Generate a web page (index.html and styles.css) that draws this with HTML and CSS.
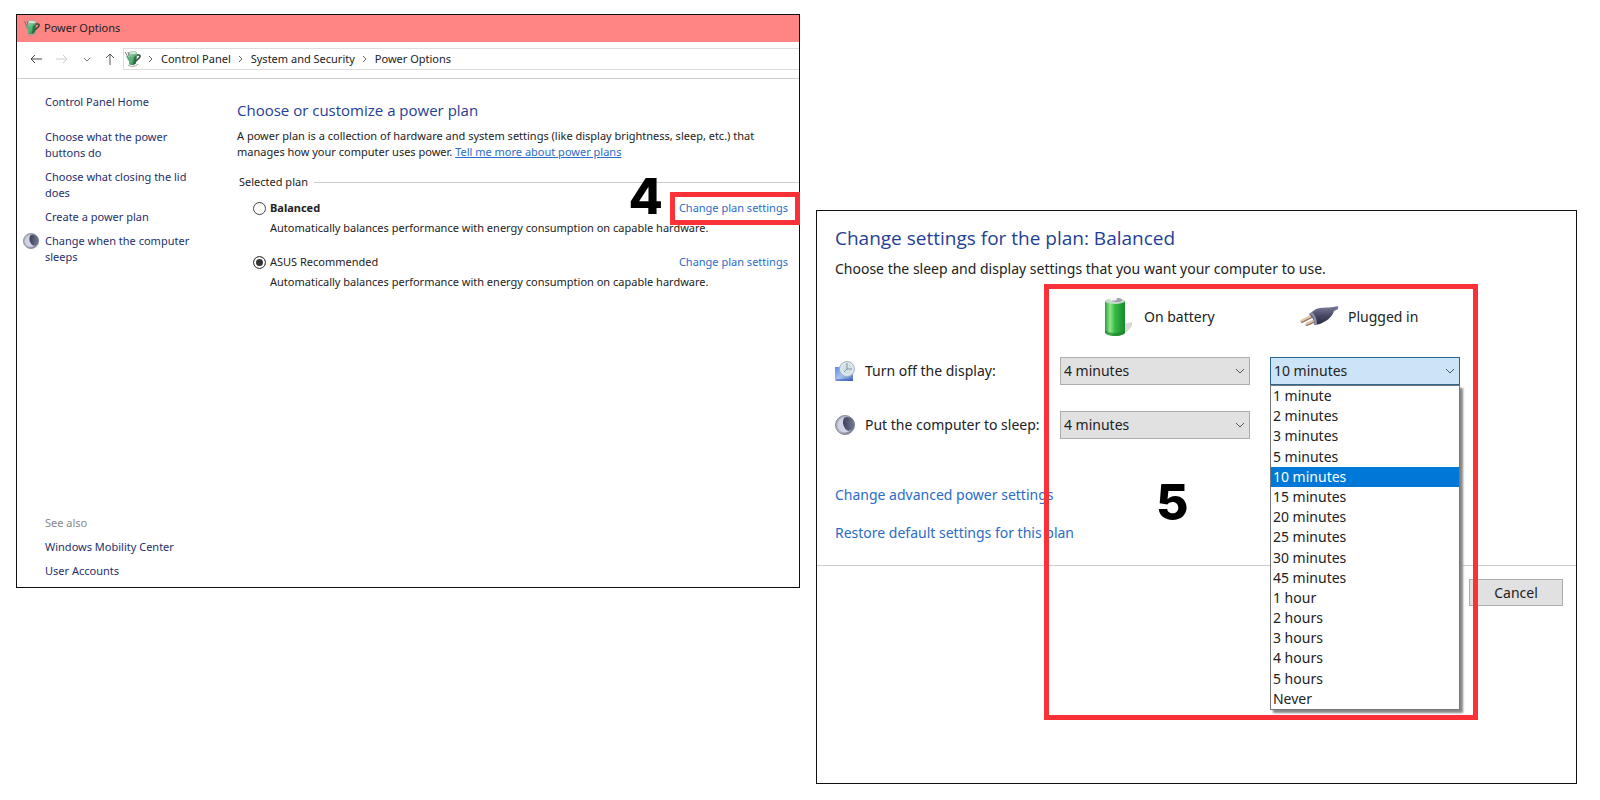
FILE: index.html
```
<!DOCTYPE html>
<html lang="en">
<head>
    <meta charset="UTF-8">
    <title>Power Options</title>
    <link rel="stylesheet" href="styles.css">
</head>
<body>

    <!-- shared icons -->
    <svg class="defs" aria-hidden="true">
        <defs>
            <linearGradient id="green" x1="0" x2="1" y1="0" y2="0">
                <stop offset="0" stop-color="#2f9a3d"/>
                <stop offset="0.25" stop-color="#8fe88a"/>
                <stop offset="0.5" stop-color="#35b843"/>
                <stop offset="1" stop-color="#178a2a"/>
            </linearGradient>
            <linearGradient id="mug" x1="0" x2="1" y1="0" y2="1">
                <stop offset="0" stop-color="#a5dcb4"/>
                <stop offset="0.5" stop-color="#4fae6c"/>
                <stop offset="1" stop-color="#1f6a3c"/>
            </linearGradient>
            <linearGradient id="moon-bg" x1="0" x2="1" y1="0" y2="1">
                <stop offset="0" stop-color="#a9acba"/>
                <stop offset="0.5" stop-color="#b4b7c8"/>
                <stop offset="1" stop-color="#6b6d7c"/>
            </linearGradient>
            <linearGradient id="moon-dark" x1="0" x2="1" y1="0" y2="0">
                <stop offset="0" stop-color="#3b415c"/>
                <stop offset="1" stop-color="#777c94"/>
            </linearGradient>
            <linearGradient id="screen" x1="0" x2="1" y1="0" y2="1">
                <stop offset="0" stop-color="#5f8be0"/>
                <stop offset="0.5" stop-color="#a9c2f0"/>
                <stop offset="1" stop-color="#3c62bd"/>
            </linearGradient>
            <linearGradient id="plug-body" x1="0" x2="0" y1="0" y2="1">
                <stop offset="0" stop-color="#7d7f9e"/>
                <stop offset="0.5" stop-color="#474865"/>
                <stop offset="1" stop-color="#2a293d"/>
            </linearGradient>
        </defs>
        <symbol id="power" viewBox="0 0 16 16">
            <path d="M3 14c2 2 8 2 10-1" fill="none" stroke="#9aa09c"/>
            <path d="M4 3l8-1-1 10c0 2-6 3-7 1z" fill="url(#mug)"/>
            <path d="M1 5l4 1 3 3-2 3-3-3z" fill="#5fae78"/>
            <path d="M0 1l3 5M3 1l1 4" stroke="#6f7571" fill="none"/>
            <ellipse cx="8" cy="2" rx="4" ry="1.500" fill="#d3ecd8" stroke="#7c9a84" stroke-width=".5"/>
            <path d="M9 6l3-2-1 8-3 2z" fill="#245f3a" opacity=".7"/>
            <path d="M12 4h2c2 0 1 3-1 4l-2 2" fill="none" stroke="#33463b" stroke-width="1.500"/>
        </symbol>
        <symbol id="moon" viewBox="0 0 20 20">
            <circle cx="10" cy="10" r="9.500" fill="url(#moon-bg)" stroke="#85889a"/>
            <circle cx="10" cy="10" r="7.500" fill="#cfd3e3"/>
            <path d="M9 3a7 7 0 1 1 4 13a10 10 0 0 1-4-13z" fill="url(#moon-dark)"/>
        </symbol>
        <symbol id="display" viewBox="0 0 20 20">
            <path d="M0 6h6l12 2v12H0z" fill="url(#screen)"/>
            <path d="M1 19h16" stroke="#3a5eb4"/>
            <circle cx="12" cy="8" r="7.500" fill="#dfe9ef" stroke="#a0b0bb"/>
            <circle cx="12" cy="8" r="5.500" fill="#d2e2e6"/>
            <path d="M12 2v6h5M12 8l-3 3" stroke="#7c979f" fill="none"/>
        </symbol>
        <symbol id="battery" viewBox="0 0 30 40">
            <path d="M20 38l8-9v-4l-8 2z" fill="#c9c9cb" opacity=".7"/>
            <path d="M1 4v31c0 2 4 4 10 4s10-2 10-4V4z" fill="url(#green)"/>
            <path d="M1 33v2c0 2 4 4 10 4s10-2 10-4v-2c-3 4-17 4-20 0z" fill="#1d7d2c" opacity=".6"/>
            <ellipse cx="11" cy="4" rx="10" ry="3" fill="#c3dcc6"/>
            <ellipse cx="13" cy="3" rx="5" ry="2" fill="#a49fb0"/>
            <ellipse cx="9" cy="2" rx="4" ry="1.500" fill="#f7f7fa"/>
        </symbol>
        <symbol id="plug" viewBox="0 0 38 22">
            <path d="M13 10L1 16M17 14L6 19" stroke="#8c6e5a" stroke-width="3" fill="none"/>
            <path d="M13 9L1 15M17 13L6 18" stroke="#e5c5a5" stroke-width="2" fill="none"/>
            <path d="M9 8l7-5c5-2 11-1 17-2l5-1v3l-4 2c-2 6-7 10-14 13l-6 1c1-5-2-8-5-11z" fill="url(#plug-body)"/>
            <path d="M9 8c4 1 6 6 5 11l3-1c0-5-2-9-5-12z" fill="#8d8fa8"/>
        </symbol>
        <symbol id="chevron-right" viewBox="0 0 8 8">
            <path d="M2 1l3 3-3 3" fill="none" stroke="#666"/>
        </symbol>
        <symbol id="chevron-down" viewBox="0 0 10 6">
            <path d="M1 1l4 4 4-4" fill="none" stroke="currentColor"/>
        </symbol>
    </svg>

    <section class="window power-window">
        <header class="title-bar">
            <svg class="icon-16"><use href="#power"/></svg>
            <span>Power Options</span>
        </header>

        <nav class="nav-bar">
            <div class="arrows">
                <svg width="12" height="10" viewBox="0 0 12 10"><path d="M12 5H1M5 1L1 5l4 4" fill="none" stroke="#444"/></svg>
                <svg width="12" height="10" viewBox="0 0 12 10"><path d="M0 5h11M7 1l4 4-4 4" fill="none" stroke="#ccc"/></svg>
                <svg class="recent" width="8" height="5"><use href="#chevron-down"/></svg>
                <svg width="10" height="12" viewBox="0 0 10 12"><path d="M5 12V1M1 5l4-4 4 4" fill="none" stroke="#555"/></svg>
            </div>
            <div class="address">
                <svg class="icon-16"><use href="#power"/></svg>
                <svg class="sep"><use href="#chevron-right"/></svg>
                <span>Control Panel</span>
                <svg class="sep"><use href="#chevron-right"/></svg>
                <span>System and Security</span>
                <svg class="sep"><use href="#chevron-right"/></svg>
                <span>Power Options</span>
            </div>
        </nav>

        <div class="content">
            <aside class="sidebar">
                <a class="home" href="#">Control Panel Home</a>
                <a href="#">Choose what the power buttons do</a>
                <a href="#">Choose what closing the lid does</a>
                <a href="#">Create a power plan</a>
                <a class="current" href="#"><svg class="icon-16"><use href="#moon"/></svg>Change when the computer sleeps</a>
                <span class="see-also">See also</span>
                <a href="#">Windows Mobility Center</a>
                <a href="#">User Accounts</a>
            </aside>

            <main class="plans">
                <h1>Choose or customize a power plan</h1>
                <p>A power plan is a collection of hardware and system settings (like display brightness, sleep, etc.) that manages how your computer uses power. <a class="underlined" href="#">Tell me more about power plans</a></p>

                <div class="group-title">Selected plan</div>

                <div class="plan">
                    <input type="radio" name="plan" id="balanced">
                    <label for="balanced"><b>Balanced</b></label>
                    <a href="#">Change plan settings</a>
                    <p>Automatically balances performance with energy consumption on capable hardware.</p>
                    <span class="step step-4">4</span>
                    <span class="mark mark-link"></span>
                </div>
                <div class="plan">
                    <input type="radio" name="plan" id="asus" checked>
                    <label for="asus">ASUS Recommended</label>
                    <a href="#">Change plan settings</a>
                    <p>Automatically balances performance with energy consumption on capable hardware.</p>
                </div>
            </main>
        </div>
    </section>

    <section class="window settings-window">
        <div class="settings">
            <h2>Change settings for the plan: Balanced</h2>
            <p>Choose the sleep and display settings that you want your computer to use.</p>

            <div class="grid">
                <span></span>
                <div class="source"><svg width="30" height="40"><use href="#battery"/></svg>On battery</div>
                <div class="source plugged"><svg width="38" height="22"><use href="#plug"/></svg>Plugged in</div>

                <label class="setting" for="display-battery"><svg class="icon-20"><use href="#display"/></svg>Turn off the display:</label>
                <div class="select">
                    <select id="display-battery"><option>4 minutes</option></select>
                    <svg class="arrow"><use href="#chevron-down"/></svg>
                </div>
                <div class="select open">
                    <select id="display-plugged" aria-label="Turn off the display, plugged in"><option>10 minutes</option></select>
                    <svg class="arrow"><use href="#chevron-down"/></svg>
                    <ul class="options" role="listbox">
                        <li role="option">1 minute</li>
                        <li role="option">2 minutes</li>
                        <li role="option">3 minutes</li>
                        <li role="option">5 minutes</li>
                        <li role="option" class="active" aria-selected="true">10 minutes</li>
                        <li role="option">15 minutes</li>
                        <li role="option">20 minutes</li>
                        <li role="option">25 minutes</li>
                        <li role="option">30 minutes</li>
                        <li role="option">45 minutes</li>
                        <li role="option">1 hour</li>
                        <li role="option">2 hours</li>
                        <li role="option">3 hours</li>
                        <li role="option">4 hours</li>
                        <li role="option">5 hours</li>
                        <li role="option">Never</li>
                    </ul>
                </div>

                <label class="setting" for="sleep-battery"><svg class="icon-20"><use href="#moon"/></svg>Put the computer to sleep:</label>
                <div class="select">
                    <select id="sleep-battery"><option>4 minutes</option></select>
                    <svg class="arrow"><use href="#chevron-down"/></svg>
                </div>
            </div>

            <div class="links">
                <a href="#">Change advanced power settings</a>
                <a href="#">Restore default settings for this plan</a>
            </div>
        </div>

        <footer class="buttons">
            <button type="button">Cancel</button>
        </footer>

        <span class="step step-5">5</span>
        <span class="mark mark-settings"></span>
    </section>

</body>
</html>
```
FILE: styles.css
```
* {
    box-sizing: border-box;
}

body {
    display: flex;
    align-items: flex-start;
    gap: 16px;
    margin: 0;
    padding: 14px 23px 16px 16px;
    background-color: #fff;
    color: #222;
    font-family: "Noto Sans", "Open Sans", sans-serif;
    font-size: 11px;
    line-height: 16px;
}

h1, h2, p {
    margin: 0;
    font-weight: normal;
}

h1, h2 {
    color: #1f4096;
    font-family: "Open Sans", sans-serif;
}

a {
    color: #2a6cc8;
    text-decoration: none;
}

svg {
    flex: none;
}

.defs {
    position: absolute;
    width: 0;
    height: 0;
}

.icon-16 {
    width: 16px;
    height: 16px;
}

.icon-20 {
    width: 20px;
    height: 20px;
}

.window {
    position: relative;
    border: 1px solid #111;
    min-height: 574px;
}

/* Power Options window */
.power-window {
    display: flex;
    flex-direction: column;
    flex: 784 1 0;
}

.title-bar {
    display: flex;
    align-items: center;
    gap: 4px;
    height: 27px;
    padding: 0 7px 2px;
    background-color: #ff8585;
}

.nav-bar {
    display: flex;
    align-items: center;
    height: 37px;
    padding-bottom: 2px;
    border-bottom: 1px solid #ccc;
}

.arrows {
    display: flex;
    align-items: center;
    justify-content: space-between;
    width: 106px;
    padding: 0 8px 0 13px;
}

.recent {
    color: #555;
}

.address {
    display: flex;
    align-items: center;
    flex: 1;
    gap: 6px;
    height: 22px;
    padding-left: 1px;
    border: 1px solid #ddd;
    border-right: 0;
}

.sep {
    width: 8px;
    height: 8px;
}

.content {
    display: flex;
    flex: 1;
}

.sidebar {
    display: flex;
    flex-direction: column;
    gap: 8px;
    width: 220px;
    padding: 15px 40px 8px 28px;
}

.sidebar a {
    color: #262f6b;
}

.sidebar .home {
    margin-bottom: 11px;
}

.current {
    position: relative;
}

.current svg {
    position: absolute;
    left: -22px;
}

.see-also {
    margin-top: auto;
    color: #888;
}

.plans {
    flex: 1;
    padding-top: 21px;
}

.plans h1 {
    margin-bottom: 8px;
    font-size: 15px;
    line-height: 20px;
}

.plans > p {
    max-width: 540px;
}

.underlined {
    text-decoration: underline;
}

.group-title {
    display: flex;
    align-items: center;
    gap: 6px;
    margin: 14px 0 10px 2px;
}

.group-title::after {
    content: "";
    flex: 1;
    border-top: 1px solid #ccc;
}

.plan {
    position: relative;
    display: grid;
    grid-template-columns: 13px 1fr auto;
    column-gap: 4px;
    row-gap: 4px;
    align-items: center;
    margin-bottom: 18px;
    padding: 0 11px 0 16px;
}

.plan input {
    appearance: none;
    width: 13px;
    height: 13px;
    margin: 0;
    border: 1px solid #444;
    border-radius: 50%;
}

.plan input:checked {
    background-color: #333;
    box-shadow: inset 0 0 0 2px #fff;
}

.plan p {
    grid-column: 2 / 4;
}

/* Plan settings window */
.settings-window {
    flex: 761 1 0;
    margin-top: 196px;
    font-size: 14px;
    line-height: 20px;
}

.settings {
    padding: 14px 18px 22px;
    border-bottom: 1px solid #ccc;
}

.settings h2 {
    margin-bottom: 8px;
    font-size: 19px;
    line-height: 26px;
}

.grid {
    display: grid;
    grid-template-columns: 205px 190px 190px;
    column-gap: 20px;
    row-gap: 26px;
    margin-top: 24px;
}

.source {
    display: flex;
    align-items: center;
    gap: 10px;
    height: 28px;
    padding-left: 44px;
}

.source.plugged {
    padding-left: 30px;
}

.setting {
    display: flex;
    align-items: center;
    gap: 10px;
    white-space: nowrap;
}

.select {
    position: relative;
}

.select select {
    appearance: none;
    display: block;
    width: 100%;
    height: 28px;
    padding: 0 3px;
    border: 1px solid #adadad;
    border-radius: 0;
    background-color: #e1e1e1;
    color: #222;
    font: inherit;
}

.select.open select {
    border-color: #2f6690;
    background-color: #cce4f7;
}

.arrow {
    position: absolute;
    top: 11px;
    right: 5px;
    width: 10px;
    height: 6px;
    color: #555;
    pointer-events: none;
}

.options {
    position: absolute;
    top: 28px;
    left: 0;
    z-index: 1;
    display: flex;
    flex-direction: column;
    width: 100%;
    height: 325px;
    margin: 0;
    padding: 0;
    border: 1px solid #777;
    background-color: #fff;
    box-shadow: 3px 3px 2px #888;
    list-style: none;
}

.options li {
    flex: 1;
    padding-left: 2px;
}

.options .active {
    background-color: #0078d7;
    color: #fff;
}

.links {
    display: flex;
    flex-direction: column;
    align-items: flex-start;
    gap: 18px;
    margin-top: 46px;
}

.buttons {
    display: flex;
    justify-content: flex-end;
    padding: 13px;
}

.buttons button {
    width: 94px;
    height: 27px;
    border: 1px solid #adadad;
    background-color: #e1e1e1;
    color: #222;
    font: inherit;
}

/* Step numbers and red frames drawn over the windows */
.step {
    position: absolute;
    color: #000;
    font-family: Inter, sans-serif;
    font-size: 50px;
    font-weight: 800;
    line-height: 50px;
}

.step-4 {
    top: -29px;
    right: 136px;
}

.step-5 {
    top: 266px;
    left: 339px;
}

.mark {
    position: absolute;
    z-index: 2;
    border: 5px solid #fa3237;
    pointer-events: none;
}

.mark-link {
    top: -8px;
    right: -1px;
    width: 130px;
    height: 33px;
}

.mark-settings {
    top: 73px;
    left: 227px;
    width: 434px;
    height: 436px;
}
```
